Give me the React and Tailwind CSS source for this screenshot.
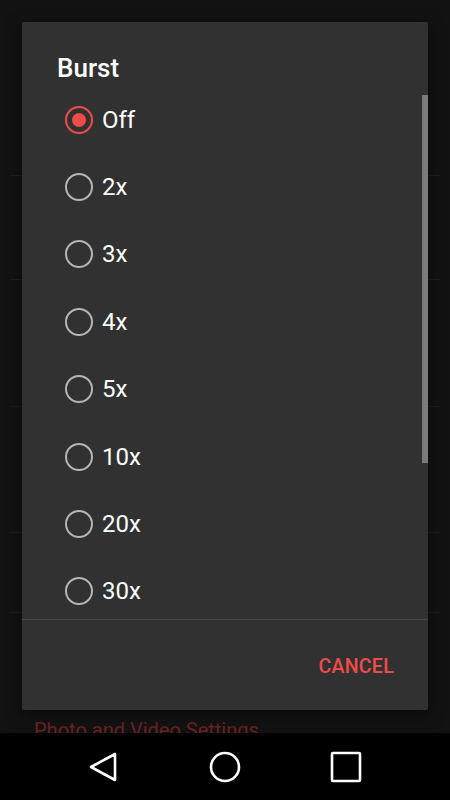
import React from "react";

const options = ["Off", "2x", "3x", "4x", "5x", "10x", "20x", "30x"];

const Radio = ({ checked }) => (
  <span
    className={
      "flex h-[28px] w-[28px] shrink-0 items-center justify-center rounded-full border-[2.5px] " +
      (checked ? "border-[#f04b4b]" : "border-[#b5b5b5]")
    }
  >
    {checked && <span className="h-[14px] w-[14px] rounded-full bg-[#f04b4b]" />}
  </span>
);

const NavBar = () => (
  <div className="flex h-[67px] items-center justify-between bg-black px-[88px]">
    <svg width="32" height="32" viewBox="0 0 32 32" className="-ml-[1px]">
      <path d="M28 3 L4 16 L28 29 Z" fill="none" stroke="white" strokeWidth="2.6" strokeLinejoin="round" />
    </svg>
    <svg width="32" height="32" viewBox="0 0 32 32">
      <circle cx="16" cy="16" r="14" fill="none" stroke="white" strokeWidth="2.6" />
    </svg>
    <svg width="32" height="32" viewBox="0 0 32 32">
      <rect x="2" y="2" width="28" height="28" rx="1" fill="none" stroke="white" strokeWidth="2.6" />
    </svg>
  </div>
);

export default function App() {
  const [selected, setSelected] = React.useState("Off");

  return (
    <div
      className="flex h-[800px] w-[450px] flex-col overflow-hidden bg-[#121212]"
      style={{ fontFamily: "Roboto, 'Noto Sans', sans-serif" }}
    >
      <div className="relative flex-1 overflow-hidden">
        {/* settings list behind the dialog */}
        <div className="flex flex-col pl-[11px] pr-[11px]">
          <div className="h-[176px] border-b border-[#1f1f1f]" />
          <div className="h-[104px] border-b border-[#1f1f1f]" />
          <div className="h-[127px] border-b border-[#1f1f1f]" />
          <div className="h-[126px] border-b border-[#1f1f1f]" />
          <div className="h-[80px] border-b border-[#1f1f1f]" />
          <div className="pl-[23px] pt-[104px] text-[20px] leading-[26px] text-[#6b2222]">
            Photo and Video Settings
          </div>
        </div>

        {/* dialog */}
        <div className="absolute left-[22px] top-[22px] flex h-[688px] w-[406px] flex-col rounded-[2px] bg-[#313131] shadow-[0_4px_16px_rgba(0,0,0,0.5)]">
          <div className="pl-[35px] pt-[30px] text-[26px] font-medium leading-[32px] text-white">
            Burst
          </div>
          <div className="relative h-[535px] overflow-hidden">
            <div className="pt-[2px]">
              {options.map((o) => (
                <button
                  key={o}
                  onClick={() => setSelected(o)}
                  className="flex h-[67.4px] w-full items-center gap-[9px] pl-[43px] text-left"
                >
                  <Radio checked={selected === o} />
                  <span className="text-[24px] leading-none text-white">{o}</span>
                </button>
              ))}
            </div>
            <div className="absolute right-0 top-[11px] h-[368px] w-[6px] bg-[#7b7b7b]" />
          </div>
          <div className="h-px bg-[#474747]" />
          <div className="flex flex-1 items-center justify-end pr-[34px] pt-[3px]">
            <span className="text-[19.5px] font-medium leading-none tracking-[0.3px] text-[#f04b4b]">
              CANCEL
            </span>
          </div>
        </div>
      </div>
      <NavBar />
    </div>
  );
}
